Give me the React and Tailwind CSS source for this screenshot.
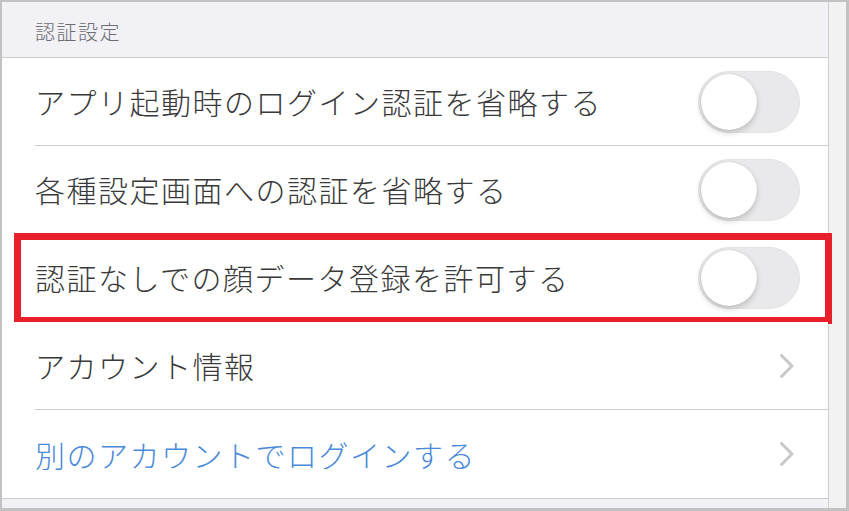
import React from "react";

const rows = [
  { label: "アプリ起動時のログイン認証を省略する", kind: "toggle" },
  { label: "各種設定画面への認証を省略する", kind: "toggle" },
  { label: "認証なしでの顔データ登録を許可する", kind: "toggle", highlight: true },
  { label: "アカウント情報", kind: "link" },
  { label: "別のアカウントでログインする", kind: "link", blue: true },
];

function Toggle() {
  return (
    <div className="relative w-[102px] h-[62px] rounded-full bg-[#e9e9eb] border border-[#e3e3e5]">
      <div className="absolute left-[2px] top-[2px] w-[56px] h-[56px] rounded-full bg-white shadow-[0_3px_6px_rgba(0,0,0,0.18),0_0_1px_rgba(0,0,0,0.2)]" />
    </div>
  );
}

function Chevron() {
  return (
    <svg width="16" height="26" viewBox="0 0 16 26" fill="none">
      <path d="M2.5 2.5 L13 13 L2.5 23.5" stroke="#c7c7cc" strokeWidth="3" strokeLinecap="round" strokeLinejoin="round" />
    </svg>
  );
}

export default function App() {
  return (
    <div
      className="w-[849px] h-[511px] flex bg-white border-t-2 border-l-2 border-r-[3px] border-b-[3px] border-[#c2c2c2] overflow-hidden"
      style={{ fontFamily: '"Noto Sans CJK JP", "Noto Sans", sans-serif' }}
    >
      <div className="flex-1 flex flex-col border-r border-[#cfcfcf]">
        {/* Section header */}
        <div className="h-[56px] shrink-0 bg-[#f1f1f6] border-b border-[#cdcdd1] flex items-center pl-[33px] pt-[4px]">
          <span className="text-[20px] font-light tracking-[1.5px] text-[#6d6d72]">認証設定</span>
        </div>

        {/* Rows */}
        {rows.map((row, i) => (
          <div key={i} className="relative h-[88px] shrink-0 pl-[33px] bg-white">
            <div
              className={
                "h-full flex items-center justify-between " +
                (i < rows.length - 1 ? "border-b border-[#cdcdd1]" : "")
              }
            >
              <span
                className={
                  "text-[30px] font-light tracking-[1.5px] " +
                  (row.blue ? "text-[#4a8ad9]" : "text-[#3a3a3a]")
                }
              >
                {row.label}
              </span>
              {row.kind === "toggle" ? (
                <div className="pr-[28px]">
                  <Toggle />
                </div>
              ) : (
                <div className="pr-[33px]">
                  <Chevron />
                </div>
              )}
            </div>
            {row.highlight && (
              <div className="absolute left-[12px] right-[-4px] top-[-1px] h-[91px] border-[7px] border-[#e8202a] pointer-events-none" />
            )}
          </div>
        ))}

        <div className="flex-1 bg-[#f1f1f6] border-t border-[#cdcdd1]" />
      </div>
      <div className="w-[17px] shrink-0 bg-[#f2f2f2]" />
    </div>
  );
}
